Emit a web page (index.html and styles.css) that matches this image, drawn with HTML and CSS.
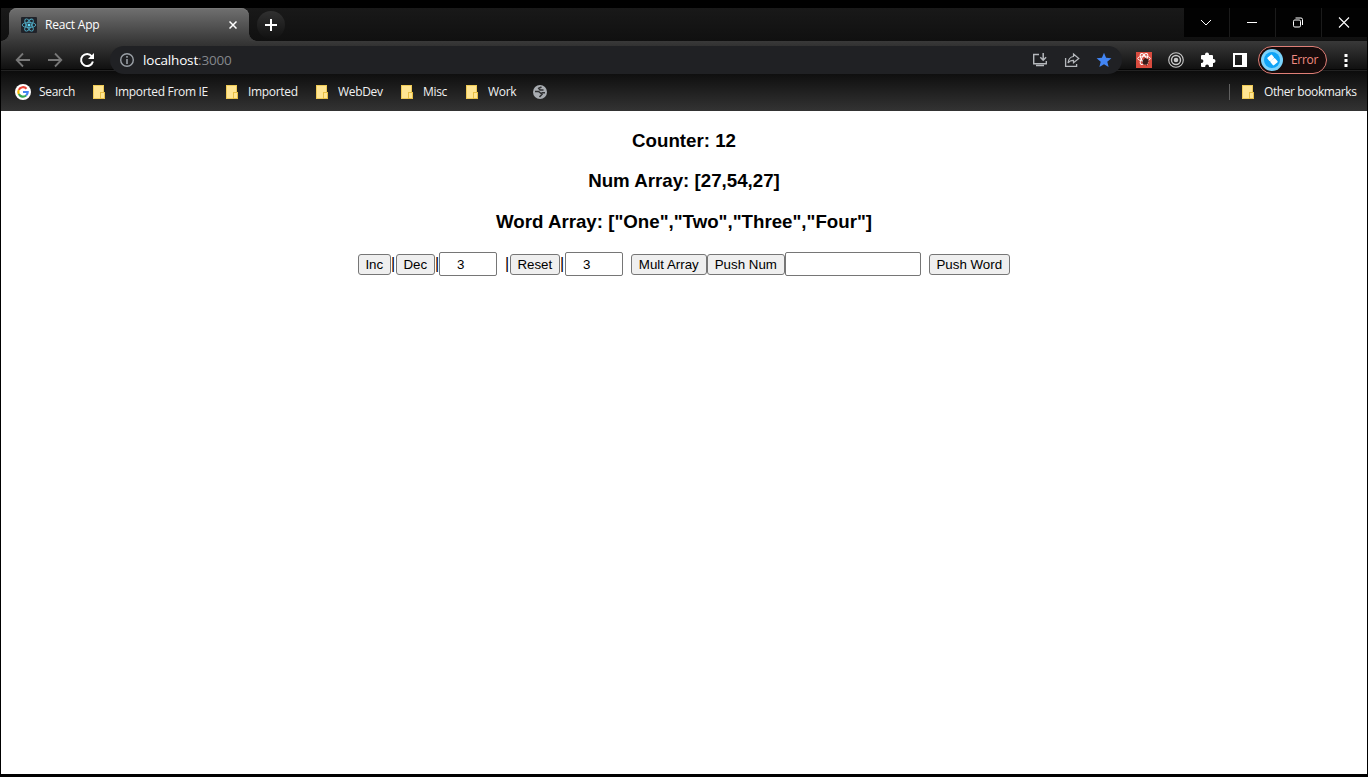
FILE: index.html
```html
<!DOCTYPE html>
<html lang="en">
<head>
<meta charset="utf-8">
<title>React App</title>
<link rel="stylesheet" href="styles.css">
</head>
<body>
<div class="window">
  <header class="tabstrip">
    <div class="tab">
      <svg class="favicon" width="16" height="16" viewBox="0 0 16 16"><rect width="16" height="16" rx="1" fill="#20232a"/><g fill="none" stroke="#4fa9c2" stroke-width=".9"><ellipse cx="8" cy="8" rx="6.8" ry="2.6"/><ellipse cx="8" cy="8" rx="6.8" ry="2.6" transform="rotate(60 8 8)"/><ellipse cx="8" cy="8" rx="6.8" ry="2.6" transform="rotate(120 8 8)"/></g><circle cx="8" cy="8" r="1.5" fill="#61dafb"/></svg>
      <span class="tab-title">React App</span>
      <svg class="tab-close" width="8" height="8" viewBox="0 0 8 8"><path d="M.5.5l7 7M7.500 .5l-7 7" stroke="#fff" stroke-width="1.500"/></svg>
    </div>
    <div class="new-tab"><svg width="12" height="12" viewBox="0 0 12 12"><path d="M6 0v12M0 6h12" stroke="#fff" stroke-width="2"/></svg></div>
    <div class="window-buttons">
      <div class="wb"><svg width="12" height="12" viewBox="0 0 12 12"><path d="M1 3l5 5 5-5" fill="none" stroke="#fff"/></svg></div>
      <div class="wb"><svg width="12" height="12" viewBox="0 0 12 12"><path d="M1 5.500h10" stroke="#fff"/></svg></div>
      <div class="wb"><svg width="12" height="12" viewBox="0 0 12 12"><rect x="1.500" y="3" width="7" height="7" rx="1.300" fill="none" stroke="#fff"/><path d="M3.500 1H9q1.500 0 1.500 1.500v5.500" fill="none" stroke="#fff"/></svg></div>
      <div class="wb"><svg width="12" height="12" viewBox="0 0 12 12"><path d="M1 .5l10 10M11 .5L1 10.500" stroke="#fff" stroke-width="1.100"/></svg></div>
    </div>
  </header>

  <div class="toolbar">
    <svg class="nav" width="16" height="16" viewBox="0 0 16 16"><path d="M15 8H2M8 1.500L1.700 8 8 14.500" fill="none" stroke="#777" stroke-width="1.800"/></svg>
    <svg class="nav" width="16" height="16" viewBox="0 0 16 16"><path d="M1 8h13M8 1.500L14.300 8 8 14.500" fill="none" stroke="#777" stroke-width="1.800"/></svg>
    <svg class="nav" width="16" height="16" viewBox="0 0 16 16"><path d="M12.800 4.300A6 6 0 1 0 13.900 9.500" fill="none" stroke="#fff" stroke-width="2"/><path d="M15 1v6H9z" fill="#fff"/></svg>
    <div class="omnibox">
      <svg width="16" height="16" viewBox="0 0 16 16"><circle cx="8" cy="8" r="6.300" fill="none" stroke="#9aa0a6" stroke-width="1.400"/><path d="M8 4v1.700M8 7v5" stroke="#9aa0a6" stroke-width="1.600"/></svg>
      <span class="url">localhost<span class="port">:3000</span></span>
      <svg class="ob-icon ob-first" width="16" height="16" viewBox="0 0 16 16"><path d="M7 2.500H1.700v9.200h12.600V9" fill="none" stroke="#b5b8bc" stroke-width="1.400"/><path d="M4 13.500h8M11.200 1v7M8.300 5.300l2.900 2.900 2.900-2.900" fill="none" stroke="#b5b8bc" stroke-width="1.500"/></svg>
      <svg class="ob-icon" width="16" height="16" viewBox="0 0 16 16"><path d="M1.600 6v8.300h11V12" fill="none" stroke="#b5b8bc" stroke-width="1.300"/><path d="M9.500 2l5.300 4.500-5.300 4.300V8.300c-2.700 0-4.300.8-5.500 2.700.3-3.300 2.100-6 5.500-6.500z" fill="none" stroke="#b5b8bc" stroke-width="1.200"/></svg>
      <svg class="ob-icon" width="16" height="16" viewBox="0 0 16 16"><path d="M8 .8l2.100 5 5.300.4-4.100 3.500 1.300 5.300L8 12.200 3.400 15l1.300-5.300L.6 6.200l5.300-.4z" fill="#4285f4"/></svg>
    </div>
    <svg class="ext" width="16" height="16" viewBox="0 0 16 16"><rect width="16" height="16" fill="#d94b3e"/><g fill="none" stroke="#fff" stroke-width="1"><ellipse cx="8" cy="6.500" rx="6.300" ry="2.400"/><ellipse cx="8" cy="7" rx="6" ry="2.400" transform="rotate(60 8 7)"/><ellipse cx="8" cy="7" rx="6" ry="2.400" transform="rotate(120 8 7)"/></g><ellipse cx="9.500" cy="9.500" rx="2.600" ry="3.300" transform="rotate(40 9.500 9.500)" fill="#381b18"/><path d="M6.500 8l6 4M9 6l1.500 7.500M12.500 7.500L7 12" stroke="#381b18" stroke-width=".9"/></svg>
    <svg class="ext" width="16" height="16" viewBox="0 0 16 16"><g fill="none" stroke="#c8c8c8"><circle cx="8" cy="8" r="7.300" stroke-width="1.100"/><circle cx="8" cy="8" r="4.500" stroke-width="1.400"/></g><circle cx="8" cy="8" r="2.300" fill="#c8c8c8"/></svg>
    <svg class="ext" width="16" height="16" viewBox="0 0 16 16"><path d="M1 4q0-1 1-1h3V2.500a2 2 0 0 1 4 0V3h3q1 0 1 1v3h.5a2 2 0 0 1 0 4H13v3q0 1-1 1H9v-.5a1.900 1.900 0 0 0-3.800 0v.5H2q-1 0-1-1v-3h.5a1.900 1.900 0 0 0 0-3.800H1z" fill="#fff"/></svg>
    <svg class="ext" width="16" height="16" viewBox="0 0 16 16"><path fill="#fff" fill-rule="evenodd" d="M1 1h14v14H1zM3 3v10h7V3z"/></svg>
    <div class="profile">
      <svg width="22" height="22" viewBox="0 0 22 22"><circle cx="11" cy="11" r="11" fill="#7cd2fb"/><circle cx="11" cy="11" r="8" fill="#10a4f7"/><g fill="#fff"><rect x="-3" y="-2" width="6" height="4.500" rx="1" transform="translate(9.500 8.700) rotate(-40)"/><rect x="-3" y="-2.500" width="6" height="5.500" rx="1" transform="translate(12.800 12.500) rotate(-40)"/></g></svg>
      <span>Error</span>
    </div>
    <svg class="menu" width="4" height="14" viewBox="0 0 4 14"><path d="M.5 1h3v3h-3zM.5 6h3v3h-3zM.5 11h3v3h-3z" fill="#fff"/></svg>
  </div>

  <nav class="bookmarks">
    <div class="bm bm-search"><svg width="16" height="16" viewBox="0 0 16 16"><circle cx="8" cy="8" r="8" fill="#fff"/><g fill="none" stroke-width="2.200"><path d="M11.500 4.700A4.700 4.700 0 0 0 3.800 5.900" stroke="#ea4335"/><path d="M3.800 5.900a4.700 4.700 0 0 0 0 4.200" stroke="#fbbc05"/><path d="M3.800 10.100a4.700 4.700 0 0 0 7.300 1.400" stroke="#34a853"/><path d="M11.100 11.500A4.700 4.700 0 0 0 12.700 8H8" stroke="#4285f4"/></g></svg><span>Search</span></div>
    <div class="bm bm-ie"><i class="folder"></i><span>Imported From IE</span></div>
    <div class="bm bm-imported"><i class="folder"></i><span>Imported</span></div>
    <div class="bm bm-webdev"><i class="folder"></i><span>WebDev</span></div>
    <div class="bm bm-misc"><i class="folder"></i><span>Misc</span></div>
    <div class="bm bm-work"><i class="folder"></i><span>Work</span></div>
    <svg width="14" height="14" viewBox="0 0 14 14"><circle cx="7" cy="7" r="7" fill="#a9adb2"/><path d="M8.500 2L5.700 3.300 7 5h3.500M2 6.500h3.500L7.500 8 9 9.300 6.500 12M8.500 7.700h3.500" fill="none" stroke="#303132" stroke-width="1.500"/></svg>
    <div class="bm bm-other"><i class="folder"></i><span>Other bookmarks</span></div>
  </nav>

  <main class="page">
    <h3>Counter: 12</h3>
    <h3>Num Array: [27,54,27]</h3>
    <h3>Word Array: ["One","Two","Three","Four"]</h3>
    <div class="controls">
      <button class="b-inc">Inc</button><span class="bar">|</span><button class="b-dec">Dec</button><span class="bar bar-tight">|</span><input class="num" value="3"><span class="bar bar-wide">|</span><button class="b-reset">Reset</button><span class="bar">|</span><input class="num" value="3"><button class="b-mult">Mult Array</button><button class="b-num">Push Num</button><input class="word" value=""><button class="b-word">Push Word</button>
    </div>
  </main>
</div>
</body>
</html>
```
FILE: styles.css
```css
* { box-sizing: border-box; }
body { margin: 0; background: #000; height: 777px; padding: 8px 1px 3px; overflow: hidden; }
.window { height: 766px; display: flex; flex-direction: column; font-family: "Open Sans", "Noto Sans", sans-serif; font-size: 12px; color: #f1f1f1; }
svg { display: block; flex: none; }
span { white-space: nowrap; }

.tabstrip { height: 33px; flex: none; display: flex; background: linear-gradient(#191919, #101010); padding-left: 8px; }
.tab { position: relative; width: 240px; height: 33px; display: flex; align-items: center; padding: 0 12px; border-radius: 8px 8px 0 0; background: linear-gradient(#707070, #393939); box-shadow: inset 0 1px #777; }
.tab::before, .tab::after { content: ""; position: absolute; bottom: 0; width: 8px; height: 8px; }
.tab::before { left: -8px; background: radial-gradient(circle at 0 0, transparent 7.5px, #3c3c3c 8px); }
.tab::after { right: -8px; background: radial-gradient(circle at 100% 0, transparent 7.5px, #3c3c3c 8px); }
.tab-title { margin-left: 8px; letter-spacing: -.2px; color: #fff; }
.tab-close { margin-left: auto; }
.new-tab { width: 28px; height: 28px; margin: 3px 0 0 8px; border-radius: 50%; display: flex; align-items: center; justify-content: center; background: linear-gradient(#303030, #111); }
.window-buttons { margin-left: auto; display: flex; gap: 1px; height: 29px; background: #1b1b1b; }
.wb { width: 45px; display: flex; align-items: center; justify-content: center; background: #020202; padding-right: 1px; }

.toolbar { height: 29px; flex: none; position: relative; z-index: 1; display: flex; align-items: center; padding: 9px 0 0 14px; background: linear-gradient(#393939, #111 95%, #050505 95%); }
.toolbar > * { flex: none; }
.nav { margin-right: 16px; }
.omnibox { width: 1012px; height: 28px; margin-left: -1px; display: flex; align-items: center; padding-left: 9px; border-radius: 14px; background: #202124; }
.url { margin-left: 8px; color: #fff; letter-spacing: -.17px; font-size: 13.5px; }
.port { color: #84878b; }
.ob-icon { margin-right: 16px; }
.ob-first { margin-left: auto; }
.omnibox .ob-icon:last-child { margin-right: 10px; }
.ext { margin-left: 16px; }
.toolbar .omnibox + .ext { margin-left: 14px; }
.profile { width: 69px; height: 28px; margin-left: 10px; display: flex; align-items: center; padding-left: 2px; border: 1px solid #e07f77; border-radius: 14px; background: #160b0b; color: #f28b82; }
.profile span { margin: -1px 0 0 8px; letter-spacing: -.3px; }
.menu { margin-left: 17px; }

.bookmarks { height: 41px; flex: none; display: flex; align-items: center; padding: 2px 10px 0 14px; background: linear-gradient(#0c0c0c, #333); border-top: 1px solid #222; }
.bm { display: flex; align-items: center; flex: none; height: 16px; letter-spacing: -.32px; }
.folder { position: relative; flex: none; width: 11px; height: 14px; margin-right: 1px; background: #ffe592; border: 1px solid #efca56; }
.folder::after { content: ""; position: absolute; right: -2px; bottom: -1px; width: 3px; height: 5px; border: 1px solid #e8bf45; background: #ffe592; }
.bm span { margin: -2px 0 0 10px; }
.bm-search { width: 78px; }
.bm-search span { margin-left: 8px; }
.bm-ie { width: 133px; }
.bm-imported { width: 90px; }
.bm-webdev { width: 85px; }
.bm-misc { width: 65px; }
.bm-work { width: 67px; }
.bm-other { width: 128px; margin-left: auto; border-left: 1px solid #606060; padding-left: 12px; letter-spacing: -.4px; }

.page { flex: 1; background: #fff; color: #000; font-family: "Liberation Sans", Arial, sans-serif; overflow: hidden; }
h3 { margin: 18.72px 0; font-size: 18.72px; font-weight: bold; text-align: center; line-height: 21.8px; }
.controls { display: flex; justify-content: center; align-items: center; height: 24px; margin-top: 19px; }
button, input { font: 13.333px "Liberation Sans", Arial, sans-serif; color: #000; margin: 0; border: 1px solid #767676; flex: none; }
button { height: 21px; padding: 0 .4px 0 0; border-radius: 3px; background: #efefef; margin-top: 1px; }
input { height: 24px; border-radius: 2px; background: #fff; padding: 3px 2px 1px; }
.num { width: 58px; padding-left: 17px; }
.word { width: 136px; margin-right: 8px; }
.bar { width: 5px; font-size: 16px; line-height: 18px; }
.bar-tight { width: 4px; }
.bar-wide { width: 13px; padding-left: 8px; }
.b-inc { width: 33px; }
.b-dec { width: 39px; }
.b-reset { width: 50px; }
.b-mult { width: 76px; margin-left: 8px; }
.b-num { width: 78px; }
.b-word { width: 81px; }
```
